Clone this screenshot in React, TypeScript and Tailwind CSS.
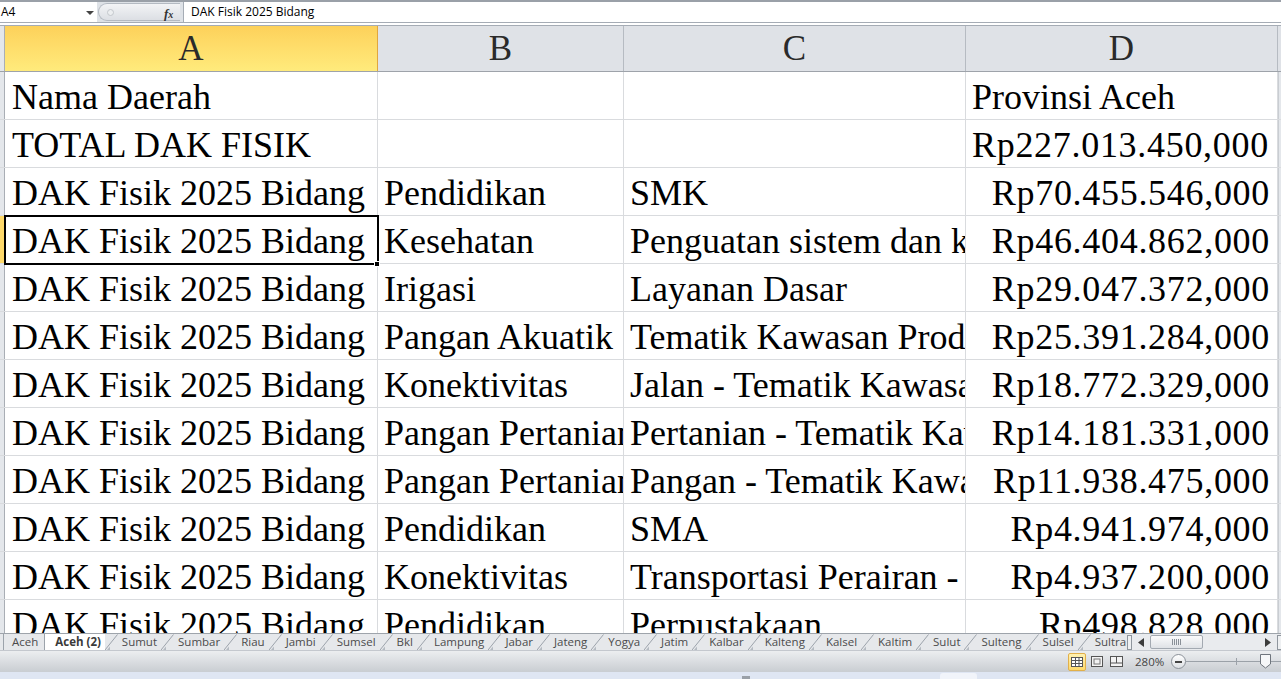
import React from "react";

type Row = [string, string, string, string, "left" | "right"];

const rows: Row[] = [
  ["Nama Daerah", "", "", "Provinsi Aceh", "left"],
  ["TOTAL DAK FISIK", "", "", "Rp227.013.450,000", "left"],
  ["DAK Fisik 2025 Bidang", "Pendidikan", "SMK", "Rp70.455.546,000", "right"],
  ["DAK Fisik 2025 Bidang", "Kesehatan", "Penguatan sistem dan kesehatan", "Rp46.404.862,000", "right"],
  ["DAK Fisik 2025 Bidang", "Irigasi", "Layanan Dasar", "Rp29.047.372,000", "right"],
  ["DAK Fisik 2025 Bidang", "Pangan Akuatik", "Tematik Kawasan Produksi", "Rp25.391.284,000", "right"],
  ["DAK Fisik 2025 Bidang", "Konektivitas", "Jalan - Tematik Kawasan", "Rp18.772.329,000", "right"],
  ["DAK Fisik 2025 Bidang", "Pangan Pertanian", "Pertanian - Tematik Kawasan", "Rp14.181.331,000", "right"],
  ["DAK Fisik 2025 Bidang", "Pangan Pertanian", "Pangan - Tematik Kawasan", "Rp11.938.475,000", "right"],
  ["DAK Fisik 2025 Bidang", "Pendidikan", "SMA", "Rp4.941.974,000", "right"],
  ["DAK Fisik 2025 Bidang", "Konektivitas", "Transportasi Perairan - Tematik", "Rp4.937.200,000", "right"],
  ["DAK Fisik 2025 Bidang", "Pendidikan", "Perpustakaan", "Rp498.828,000", "right"],
];

const sheets = [
  "Aceh", "Aceh (2)", "Sumut", "Sumbar", "Riau", "Jambi", "Sumsel", "Bkl", "Lampung", "Jabar",
  "Jateng", "Yogya", "Jatim", "Kalbar", "Kalteng", "Kalsel", "Kaltim", "Sulut", "Sulteng", "Sulsel", "Sultra",
];

const serif = { fontFamily: '"Liberation Serif", "Times New Roman", serif' };
const ui = { fontFamily: '"Open Sans", "Noto Sans", sans-serif' };

const Diag = () => (
  <svg width="13" height="16" viewBox="0 0 13 16" className="shrink-0">
    <path d="M0 16 L12.5 0.5" stroke="#9ca3ab" fill="none" />
    <path d="M2 16 L5 12.5 L5 16 Z" fill="#b5bbc2" />
  </svg>
);

const FormulaBar = () => (
  <div className="flex h-[22px] border-t-2 border-[#9aa0a8] bg-white" style={ui}>
    <div className="relative flex w-[97px] items-center bg-white text-[12px] text-black">
      <span className="pl-[1px]">A4</span>
      <svg width="8" height="5" viewBox="0 0 8 5" className="absolute left-[86px] top-[9px]">
        <path d="M0 0 L8 0 L4 4 Z" fill="#444" />
      </svg>
    </div>
    <div className="relative flex w-[86px] items-center bg-[#dee2e7]">
      <div className="ml-[1px] flex h-[18px] w-[82px] items-center rounded-l-full border border-r-0 border-[#b4bac2] bg-gradient-to-b from-[#f3f4f6] to-[#dcdfe4]">
        <span className="ml-[8px] h-[7px] w-[7px] rounded-full border border-[#c3c7cc] bg-[#eceef0]" />
      </div>
      <span className="absolute left-[67px] top-[2px] text-[13px] font-bold italic text-[#333]" style={serif}>
        f<span className="text-[10px]">x</span>
      </span>
    </div>
    <div className="flex flex-1 items-center border-l border-[#a5acb5] pl-[7px] text-[12px] text-black">
      DAK Fisik 2025 Bidang
    </div>
  </div>
);

const ColHeaders = () => (
  <div className="flex h-[46px] border-b border-[#9ea3aa] text-[35px] text-[#2a2a2a]" style={serif}>
    <div className="w-[5px] shrink-0 border-r border-[#a9aeb5] bg-[#e4e7eb]" />
    <div className="flex w-[373px] shrink-0 items-center justify-center border-r border-[#e0a63f] bg-gradient-to-b from-[#fdd15a] to-[#ffeb7c] pt-[2px]">
      A
    </div>
    <div className="flex w-[246px] shrink-0 items-center justify-center border-r border-[#b6bbc2] bg-[#dfe2e7] pt-[2px]">B</div>
    <div className="flex w-[342px] shrink-0 items-center justify-center border-r border-[#b6bbc2] bg-[#dfe2e7] pt-[2px]">C</div>
    <div className="flex w-[312px] shrink-0 items-center justify-center border-r border-[#b6bbc2] bg-[#dfe2e7] pt-[2px]">D</div>
    <div className="flex-1 bg-[#dfe2e7]" />
  </div>
);

const Cell = ({ text, w, align, num }: { text: string; w: string; align?: string; num?: boolean }) => (
  <div
    className={`flex h-full shrink-0 items-end overflow-hidden whitespace-nowrap border-r border-[#d9dbde] pb-[4px] leading-none ${w} ${
      align === "right" ? "justify-end pr-[7px]" : "pl-[6px]"
    }`}
    style={num ? { letterSpacing: "0.7px" } : undefined}
  >
    {text}
  </div>
);

const Grid = () => (
  <div className="flex-1 overflow-hidden bg-white text-[36px] text-black" style={serif}>
    {rows.map((r, i) => {
      const selected = i === 3;
      return (
        <div key={i} className="flex h-[48px] border-b border-[#d9dbde]">
          <div className={`w-[5px] shrink-0 border-r ${selected ? "border-[#e0a63f] bg-[#fed96a]" : "border-[#a9aeb5] bg-[#e4e7eb]"}`} />
          <div className="flex h-full w-[373px] shrink-0 items-end overflow-hidden whitespace-nowrap border-r border-[#d9dbde] pb-[4px] pl-[7px] leading-none">
            {r[0]}
          </div>
          <Cell text={r[1]} w="w-[246px]" />
          <Cell text={r[2]} w="w-[342px]" />
          <Cell text={r[3]} w="w-[312px]" align={r[4]} num={r[3].startsWith("Rp")} />
          <div className="flex-1 border-l border-[#c9cdd2] bg-[#e4e7eb]" />
        </div>
      );
    })}
  </div>
);

const SheetTabs = () => (
  <div className="flex h-[17px] border-t border-[#9ea4ab] bg-[#e6e8eb] text-[11.5px] text-[#4b4b4b]" style={ui}>
    <div className="flex w-[1127px] shrink-0 items-stretch overflow-hidden pl-[3px]">
      {sheets.map((s, i) => {
        const active = i === 1;
        return (
          <React.Fragment key={s}>
            {i < 2 ? <div className="w-[1px] shrink-0 bg-[#9ca3ab]" /> : <Diag />}
            <div
              className={`flex shrink-0 items-center whitespace-nowrap leading-none ${
                active
                  ? "-mt-[1px] bg-white pl-[10px] pr-[4px] font-bold text-[#3a3a3a]"
                  : i === 0
                  ? "pl-[8px] pr-[6px]"
                  : "pl-[4px] pr-[4px]"
              }`}
            >
              {s}
            </div>
          </React.Fragment>
        );
      })}
    </div>
    <div className="flex flex-1 items-center bg-[#e9ebee]">
      <div className="h-[15px] w-[5px] border border-[#8f969e] bg-[#eef0f2]" />
      <svg width="6" height="9" viewBox="0 0 6 9" className="ml-[6px]">
        <path d="M6 0 L0 4.5 L6 9 Z" fill="#3c3c3c" />
      </svg>
      <div className="ml-[6px] flex h-[14px] w-[53px] items-center justify-center rounded-[2px] border border-[#a3a9b1] bg-gradient-to-b from-[#fbfbfc] to-[#dfe2e6]">
        <svg width="9" height="6" viewBox="0 0 9 6">
          <path d="M0.5 0 V6 M2.5 0 V6 M4.5 0 V6 M6.5 0 V6 M8.5 0 V6" stroke="#8a9098" />
        </svg>
      </div>
      <svg width="6" height="9" viewBox="0 0 6 9" className="ml-[62px]">
        <path d="M0 0 L6 4.5 L0 9 Z" fill="#3c3c3c" />
      </svg>
      <div className="ml-[6px] h-[15px] w-[5px] border border-[#8f969e] bg-[#eef0f2]" />
    </div>
  </div>
);

const StatusBar = () => (
  <div className="flex h-[22px] items-center border-t border-[#c4c8ce] bg-gradient-to-b from-[#eceef0] to-[#c9cdd2] text-[12px] text-[#444]" style={ui}>
    <div className="ml-[1068px] flex h-[18px] w-[18px] items-center justify-center rounded-[2px] border border-[#e2b04a] bg-gradient-to-b from-[#fff1b0] to-[#fed96a]">
      <svg width="12" height="10" viewBox="0 0 12 10">
        <rect x="0.5" y="0.5" width="11" height="9" fill="#fff" stroke="#555" />
        <path d="M0.5 3.5 H11.5 M0.5 6.5 H11.5 M4.5 0.5 V9.5 M8 0.5 V9.5" stroke="#555" />
      </svg>
    </div>
    <svg width="12" height="11" viewBox="0 0 12 11" className="ml-[5px]">
      <rect x="0.5" y="0.5" width="11" height="10" fill="#f3f3f3" stroke="#555" />
      <rect x="3" y="3" width="6" height="5" fill="none" stroke="#777" />
    </svg>
    <svg width="13" height="11" viewBox="0 0 13 11" className="ml-[7px]">
      <rect x="0.5" y="0.5" width="12" height="10" fill="#f3f3f3" stroke="#555" />
      <path d="M6.5 0.5 V7 M0.5 7 H12.5" stroke="#555" />
    </svg>
    <span className="ml-[12px] text-[11.5px]">280%</span>
    <div className="ml-[7px] flex h-[15px] w-[15px] items-center justify-center rounded-full border border-[#8b9199] bg-gradient-to-b from-white to-[#dde0e4]">
      <div className="h-[2px] w-[7px] bg-[#444]" />
    </div>
    <div className="relative h-[1px] flex-1 bg-[#9ba1a8]">
      <div className="absolute left-[50px] top-[-3px] h-[7px] w-[1px] bg-[#9ba1a8]" />
      <svg width="11" height="15" viewBox="0 0 11 15" className="absolute left-[74px] top-[-7px]">
        <path d="M0.5 0.5 H10.5 V10 L5.5 14 L0.5 10 Z" fill="#f6f7f8" stroke="#6f757d" />
      </svg>
    </div>
  </div>
);

export default function App() {
  return (
    <div className="flex h-[679px] w-[1281px] flex-col overflow-hidden bg-white">
      <FormulaBar />
      <div className="h-[4px] border-y border-[#a5acb5] bg-white" />
      <ColHeaders />
      <div className="relative flex min-h-0 flex-1 flex-col">
        <Grid />
        <div className="pointer-events-none absolute left-[4px] top-[143px] h-[50px] w-[375px] border-2 border-black" />
        <div className="pointer-events-none absolute left-[374px] top-[189px] h-[6px] w-[6px] border border-white bg-black" />
      </div>
      <SheetTabs />
      <StatusBar />
      <div className="relative h-[7px] bg-[#dfe6f3]">
        <div className="absolute left-[742px] top-[4px] h-[3px] w-[8px] bg-[#9aa0a8]" />
        <div className="absolute left-[940px] top-[1px] h-[6px] w-[37px] rounded-t-[3px] bg-[#f1f4fa]" />
      </div>
    </div>
  );
}
